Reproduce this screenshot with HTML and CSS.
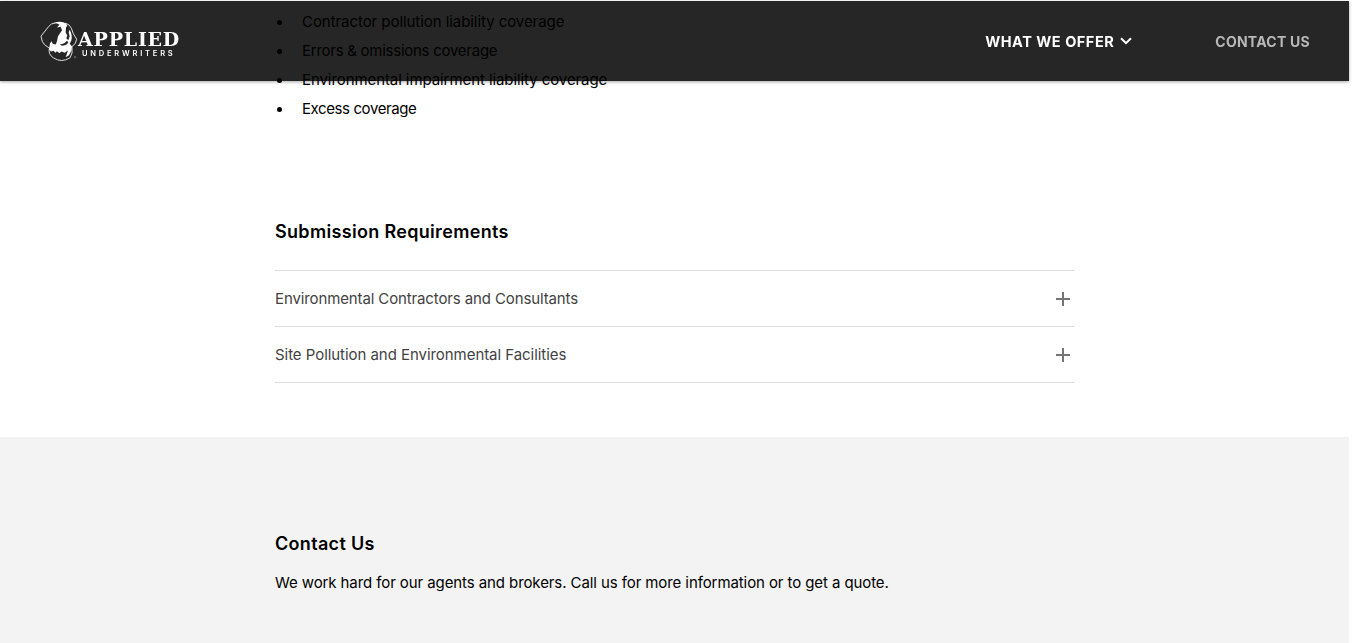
FILE: index.html
```html
<!DOCTYPE html>
<html lang="en">
<head>
<meta charset="utf-8">
<title>Applied Underwriters</title>
<link rel="stylesheet" href="styles.css">
</head>
<body>
<header class="site-header">
  <a class="brand">
    <svg class="brand-mark" viewBox="10 12 114 122" aria-hidden="true">
      <g fill="none" stroke="#ddd" stroke-width="3" stroke-linejoin="round">
        <path d="M56 17Q42 19 36 28L13 57Q15 75 24 83L38 93"/>
        <path d="M86 18Q98 20 104 33Q108 50 120 66Q118 82 106 88"/>
        <path d="M38 94Q34 111 50 122Q75 138 100 122Q109 110 106 88"/>
      </g>
      <path fill="#fff" d="M50 18Q65 12 80 15Q89 17 92 25L88 31L87 46L92 55L89 63L95 69L99 57L96 45L99 38Q108 53 104 70L99 80L106 88L104 101L97 114L87 120L94 100L84 107L75 103L68 108L61 102L56 107L51 101L43 103L37 97L40 78L45 72L48 80L57 82L61 72L64 57L76 39L72 29L61 31L68 23L62 19Z"/>
      <path fill="#262626" d="M69 82Q85 80 91 71L95 76Q88 86 76 86Z"/>
      <circle cx="115" cy="120" r="2.5" fill="none" stroke="#999" stroke-width="1.5"/>
    </svg>
    <span class="brand-text">
      <span class="brand-name">APPLIED</span>
      <span class="brand-sub">UNDERWRITERS</span>
    </span>
  </a>
  <nav class="nav">
    <a class="nav-link"><span class="offer">WHAT WE OFFER</span><svg class="chevron" viewBox="0 0 12 8"><path d="M1 1.2 6 6.2 11 1.2"/></svg></a>
    <a class="nav-link contact">CONTACT US</a>
  </nav>
</header>
<main>
  <section class="wrap coverage">
    <ul class="list">
      <li><span class="c1">Contractor pollution liability coverage</span></li>
      <li><span class="c2">Errors &amp; omissions coverage</span></li>
      <li><span class="c3">Environmental impairment liability coverage</span></li>
      <li><span class="c4">Excess coverage</span></li>
    </ul>
    <h2 class="heading h-sub">Submission Requirements</h2>
    <div class="accordion">
      <div class="row"><span class="r1">Environmental Contractors and Consultants</span><i class="plus"></i></div>
      <div class="row"><span class="r2">Site Pollution and Environmental Facilities</span><i class="plus"></i></div>
    </div>
  </section>
  <section class="contact-band">
    <div class="wrap">
      <h2 class="heading h-contact">Contact Us</h2>
      <p class="lead">We work hard for our agents and brokers. Call us for more information or to get a quote.</p>
    </div>
  </section>
</main>
</body>
</html>
```
FILE: styles.css
```css
* { box-sizing: border-box; }
body {
  margin: 0;
  width: 1349px;
  height: 643px;
  overflow: hidden;
  background: #fff;
  color: #000;
  font: 15px/29px Inter, "Liberation Sans", sans-serif;
}
.site-header {
  position: fixed;
  top: 1px;
  left: 0;
  width: 1349px;
  height: 80px;
  padding: 0 39px 0 40px;
  display: flex;
  justify-content: space-between;
  align-items: center;
  background: rgba(0, 0, 0, .85);
  box-shadow: 0 1px 3px rgba(0, 0, 0, .35);
}
.brand { display: flex; align-items: center; }
.brand-mark { width: 38px; height: 41px; flex: none; }
.brand-text { display: flex; flex-direction: column; color: #fff; padding-top: 5px; }
.brand-name { font: 700 19px/20px "DejaVu Serif", serif; letter-spacing: .8px; white-space: nowrap; }
.brand-sub { font: 600 7.5px/9px Inter, sans-serif; letter-spacing: 2.8px; padding-left: 4px; white-space: nowrap; }
.nav { display: flex; gap: 83px; font-weight: 700; font-size: 14px; color: #fff; }
.nav-link { display: flex; align-items: center; white-space: nowrap; }
.offer { font-size: 14.5px; letter-spacing: .52px; }
.contact { color: #b8b8b8; letter-spacing: .25px; }
.chevron { width: 12px; height: 8px; margin-left: 6px; fill: none; stroke: #fff; stroke-width: 2; }
.wrap { width: 800px; margin-left: 275px; white-space: nowrap; }
.coverage { padding-top: 7px; height: 437px; }
.list { list-style: none; margin: 0; padding: 0; }
.list li { display: flex; align-items: center; height: 29px; }
.list li::before { content: ""; width: 5px; height: 5px; border-radius: 50%; background: #000; margin: 2px 20px 0 2px; }
.c1 { letter-spacing: -.06px; }
.c2 { letter-spacing: -.26px; }
.c3 { letter-spacing: -.08px; }
.c4 { letter-spacing: -.4px; }
.r1 { letter-spacing: -.12px; }
.r2 { letter-spacing: -.05px; }
.heading { margin: 0; font-weight: 600; font-size: 18px; line-height: 30px; letter-spacing: .32px; }
.h-sub { margin-top: 94px; }
.accordion { margin-top: 23px; border-top: 1px solid #ddd; color: #424242; }
.row { height: 56px; border-bottom: 1px solid #ddd; display: flex; justify-content: space-between; align-items: center; }
.plus {
  width: 14px;
  height: 14px;
  margin-right: 5px;
  background: linear-gradient(#757575, #757575) center / 14px 2px no-repeat, linear-gradient(#757575, #757575) center / 2px 14px no-repeat;
}
.contact-band { height: 206px; padding-top: 92px; background: #f3f3f3; }
.lead { margin: 9px 0 0; letter-spacing: -.09px; }
```
